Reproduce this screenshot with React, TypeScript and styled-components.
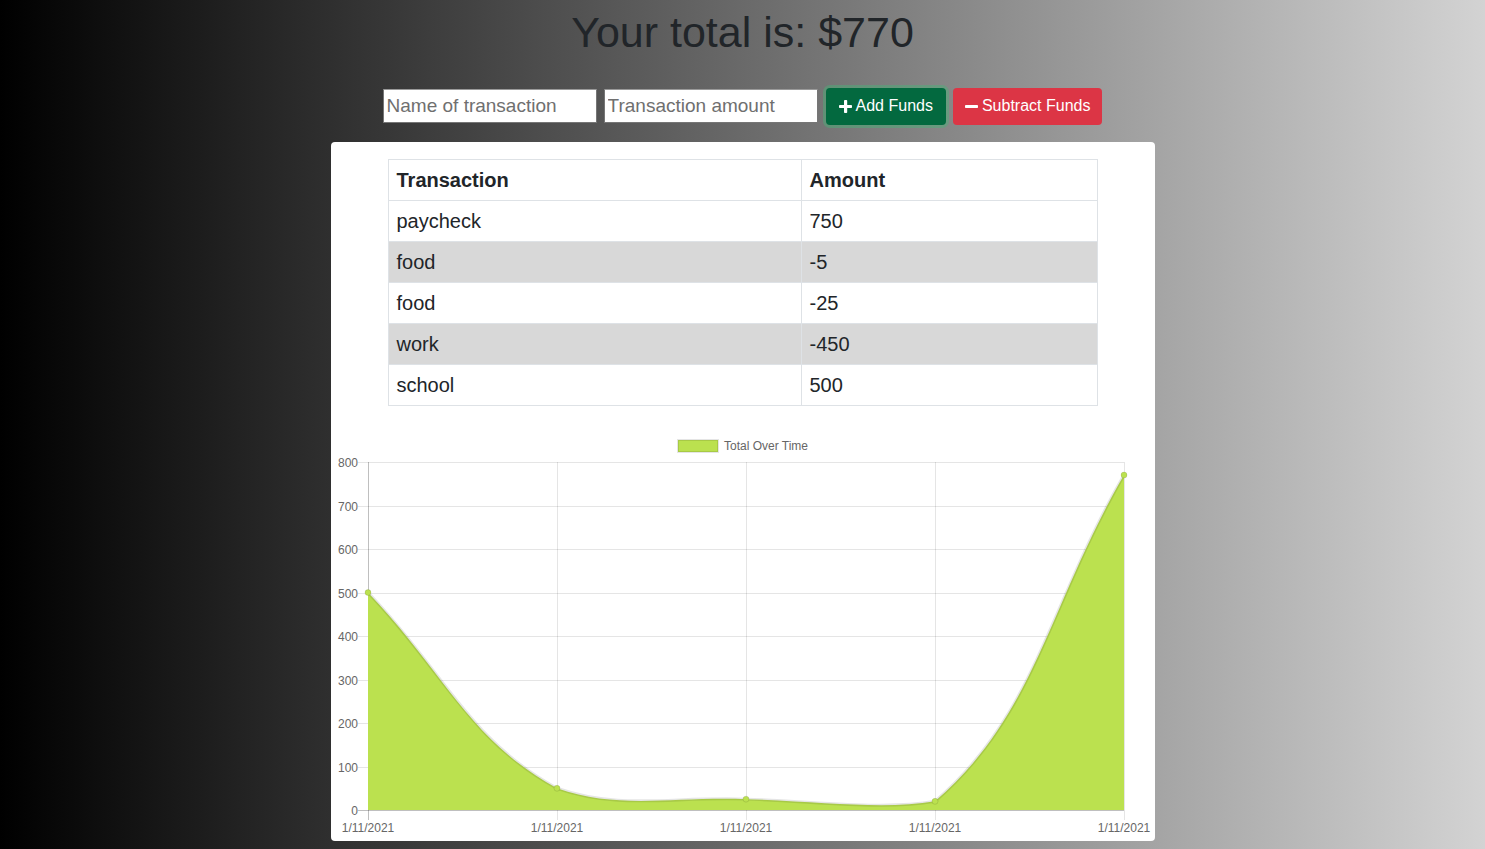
import styled, { createGlobalStyle } from 'styled-components';

const GlobalStyle = createGlobalStyle`
  html, body {
    margin: 0;
    padding: 0;
  }
  body {
    min-height: 100vh;
    background: linear-gradient(to right, #000000, #d3d3d3);
    font-family: "Liberation Sans", Arial, sans-serif;
    color: #212529;
  }
`;

const transactions = [
  { name: 'paycheck', value: 750 },
  { name: 'food', value: -5 },
  { name: 'food', value: -25 },
  { name: 'work', value: -450 },
  { name: 'school', value: 500 },
];

// running totals, oldest first (as the chart draws them)
const totals = [500, 50, 25, 20, 770];

const Page = styled.div`
  display: flex;
  flex-direction: column;
  align-items: center;
  padding-top: 7px;
`;

const Title = styled.h1`
  margin: 0;
  font-size: 43px;
  font-weight: 400;
  line-height: 1.2;
  color: #212529;
`;

const FormRow = styled.div`
  display: flex;
  align-items: center;
  gap: 7px;
  margin-top: 29px;
`;

const TextInput = styled.input`
  box-sizing: border-box;
  width: 214px;
  height: 34px;
  padding: 1px 3px;
  border: 1px solid #767676;
  border-top-color: #9a9a9a;
  background: #fff;
  font-family: "Liberation Sans", Arial, sans-serif;
  font-size: 19px;
  color: #212529;
  &::placeholder {
    color: #6f6f6f;
  }
`;

const Button = styled.button<{ $variant: 'add' | 'subtract' }>`
  display: flex;
  align-items: center;
  gap: 4px;
  box-sizing: border-box;
  height: 37px;
  padding: 0 ${(p) => (p.$variant === 'add' ? '12px' : '11px')};
  border: 1px solid transparent;
  border-radius: 4px;
  font-family: "Liberation Sans", Arial, sans-serif;
  font-size: 16px;
  color: #fff;
  background: ${(p) => (p.$variant === 'add' ? '#03693f' : '#dc3545')};
  box-shadow: ${(p) =>
    p.$variant === 'add' ? '0 0 0 3px rgba(72, 180, 120, 0.45)' : 'none'};
  margin-left: ${(p) => (p.$variant === 'add' ? '1px' : '0')};
  cursor: pointer;
`;

const Card = styled.div`
  box-sizing: border-box;
  width: 824px;
  margin-top: 17px;
  padding-top: 17px;
  background: #fff;
  border-radius: 4px;
  display: flex;
  flex-direction: column;
  align-items: center;
`;

const Table = styled.table`
  width: 710px;
  border-collapse: collapse;
  border: 1px solid #dee2e6;
  font-size: 20px;
  color: #212529;
`;

const HeadCell = styled.th`
  text-align: left;
  font-weight: 700;
  padding: 8px 8px;
  line-height: 24px;
  border: 1px solid #dee2e6;
  &:first-child {
    width: 396px;
  }
`;

const Row = styled.tr<{ $striped: boolean }>`
  background: ${(p) => (p.$striped ? '#d8d8d8' : '#fff')};
`;

const Cell = styled.td`
  padding: 8px 8px;
  line-height: 24px;
  border: 1px solid #dee2e6;
`;

const ChartSvg = styled.svg`
  display: block;
  font-family: "Liberation Sans", Arial, sans-serif;
`;

const PlusIcon = () => (
  <svg width="13" height="13" viewBox="0 0 13 13">
    <rect x="5" y="0" width="3.2" height="13" rx="0.8" fill="#fff" />
    <rect x="0" y="4.9" width="13" height="3.2" rx="0.8" fill="#fff" />
  </svg>
);

const MinusIcon = () => (
  <svg width="13" height="13" viewBox="0 0 13 13">
    <rect x="0" y="4.9" width="13" height="3.2" rx="0.8" fill="#fff" />
  </svg>
);

const GREEN = '#bbe14f';

const TotalChart = ({ data }: { data: number[] }) => {
  const width = 824;
  const height = 435;
  const left = 37;
  const right = 793;
  const top = 56;
  const bottom = 404;
  const max = 800;
  const step = (right - left) / (data.length - 1);
  const yOf = (v: number) => bottom - (v / max) * (bottom - top);
  const pts = data.map((v, i) => ({ x: left + i * step, y: yOf(v) }));

  // chart.js style spline with tension 0.4, control points capped to the area
  const clampX = (x: number) => Math.min(right, Math.max(left, x));
  const clampY = (y: number) => Math.min(bottom, Math.max(top, y));
  const cps = pts.map((cur, i) => {
    const prev = pts[i - 1] || cur;
    const next = pts[i + 1] || cur;
    const d01 = Math.hypot(cur.x - prev.x, cur.y - prev.y);
    const d12 = Math.hypot(next.x - cur.x, next.y - cur.y);
    let s01 = d01 / (d01 + d12);
    let s12 = d12 / (d01 + d12);
    if (isNaN(s01)) s01 = 0;
    if (isNaN(s12)) s12 = 0;
    const fa = 0.4 * s01;
    const fb = 0.4 * s12;
    return {
      inX: clampX(cur.x - fa * (next.x - prev.x)),
      inY: clampY(cur.y - fa * (next.y - prev.y)),
      outX: clampX(cur.x + fb * (next.x - prev.x)),
      outY: clampY(cur.y + fb * (next.y - prev.y)),
    };
  });

  let line = `M ${pts[0].x} ${pts[0].y}`;
  for (let i = 1; i < pts.length; i++) {
    line += ` C ${cps[i - 1].outX} ${cps[i - 1].outY} ${cps[i].inX} ${cps[i].inY} ${pts[i].x} ${pts[i].y}`;
  }
  const area = `${line} L ${pts[pts.length - 1].x} ${bottom} L ${pts[0].x} ${bottom} Z`;

  const yTicks = [800, 700, 600, 500, 400, 300, 200, 100, 0];
  const grid = 'rgba(0,0,0,0.1)';

  return (
    <ChartSvg width={width} height={height} viewBox={`0 0 ${width} ${height}`}>
      {/* legend */}
      <rect x={347} y={34} width={40} height={12} fill={GREEN} stroke={grid} strokeWidth={2} />
      <text x={393} y={44} fontSize={12} fill="#666">
        Total Over Time
      </text>

      {/* horizontal grid + y ticks */}
      {yTicks.map((t) => {
        const y = Math.round(yOf(t)) + 0.5;
        return (
          <g key={t}>
            <line
              x1={left - 10}
              x2={right}
              y1={y}
              y2={y}
              stroke={t === 0 ? 'rgba(0,0,0,0.25)' : grid}
            />
            <text x={left - 10} y={y + 4} fontSize={12} fill="#666" textAnchor="end">
              {t}
            </text>
          </g>
        );
      })}

      {/* vertical grid + x labels */}
      {pts.map((p, i) => {
        const x = Math.round(p.x) + 0.5;
        return (
          <g key={i}>
            <line
              x1={x}
              x2={x}
              y1={top}
              y2={bottom + 10}
              stroke={i === 0 ? 'rgba(0,0,0,0.25)' : grid}
            />
            <text x={p.x} y={426} fontSize={12} fill="#666" textAnchor="middle">
              1/11/2021
            </text>
          </g>
        );
      })}

      <path d={area} fill={GREEN} />
      <path d={line} fill="none" stroke={grid} strokeWidth={3} />
      {pts.map((p, i) => (
        <circle key={i} cx={p.x} cy={p.y} r={3} fill={GREEN} stroke={grid} strokeWidth={1} />
      ))}
    </ChartSvg>
  );
};

const App = () => {
  const total = transactions.reduce((sum, t) => sum + t.value, 0);

  return (
    <>
      <GlobalStyle />
      <Page>
        <Title>Your total is: ${total}</Title>
        <FormRow>
          <TextInput type="text" placeholder="Name of transaction" />
          <TextInput type="number" placeholder="Transaction amount" />
          <Button $variant="add">
            <PlusIcon />
            Add Funds
          </Button>
          <Button $variant="subtract">
            <MinusIcon />
            Subtract Funds
          </Button>
        </FormRow>
        <Card>
          <Table>
            <thead>
              <tr>
                <HeadCell>Transaction</HeadCell>
                <HeadCell>Amount</HeadCell>
              </tr>
            </thead>
            <tbody>
              {transactions.map((t, i) => (
                <Row key={i} $striped={i % 2 === 1}>
                  <Cell>{t.name}</Cell>
                  <Cell>{t.value}</Cell>
                </Row>
              ))}
            </tbody>
          </Table>
          <TotalChart data={totals} />
        </Card>
      </Page>
    </>
  );
};

export default App;
